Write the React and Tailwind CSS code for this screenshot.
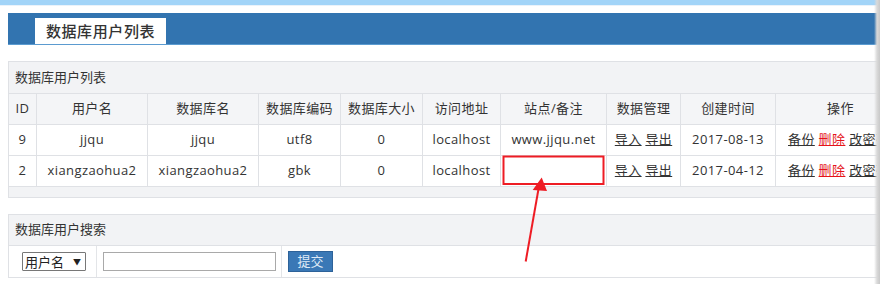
import React from 'react';

const font = { fontFamily: '"Open Sans", "Noto Sans CJK SC", sans-serif' };

const columns = [
  { title: 'ID', w: 'w-[28px]' },
  { title: '用户名', w: 'w-[111px]' },
  { title: '数据库名', w: 'w-[111px]' },
  { title: '数据库编码', w: 'w-[82px]' },
  { title: '数据库大小', w: 'w-[82px]' },
  { title: '访问地址', w: 'w-[78px]' },
  { title: '站点/备注', w: 'w-[106px]' },
  { title: '数据管理', w: 'w-[74px]' },
  { title: '创建时间', w: 'w-[95px]' },
  { title: '操作', w: 'w-[130px]' },
];

const rows = [
  { id: '9', user: 'jjqu', db: 'jjqu', charset: 'utf8', size: '0', host: 'localhost', note: 'www.jjqu.net', date: '2017-08-13' },
  { id: '2', user: 'xiangzaohua2', db: 'xiangzaohua2', charset: 'gbk', size: '0', host: 'localhost', note: '', date: '2017-04-12' },
];

function Cell({ children, className = '' }) {
  return (
    <td className={`h-[31px] border border-[#dfe1e5] text-center text-[13px] text-[#333] tracking-[0.4px] p-0 whitespace-nowrap ${className}`}>
      {children}
    </td>
  );
}

export default function App() {
  return (
    <div className="relative w-[880px] h-[284px] overflow-hidden bg-white" style={font}>
      {/* top strip */}
      <div className="h-[5px] bg-[#a2d4f8]" />
      <div className="h-[1px] bg-[#eaf2fa]" />
      <div className="h-[7px]" />

      {/* header bar with tab */}
      <div className="pl-[8px]">
        <div className="h-[32px] w-[880px] bg-[#3274b0] border-b border-[#5b9bd0] flex items-end pl-[27px]">
          <div className="w-[131px] h-[26px] bg-white flex items-center justify-center text-[15px] tracking-[0.6px] text-[#333] font-medium">
            数据库用户列表
          </div>
        </div>
      </div>

      {/* list panel */}
      <div className="ml-[8px] mt-[16px] w-[1000px] bg-[#f2f3f5] border-t border-l border-b border-[#dfe1e5]">
        <div className="h-[31px] flex items-center pl-[6px] text-[13px] text-[#333]">数据库用户列表</div>
        <table className="border-collapse table-fixed -ml-[1px]">
          <thead>
            <tr>
              {columns.map((c) => (
                <Cell key={c.title} className={`${c.w} bg-[#f4f5f7] h-[30px]`}>{c.title}</Cell>
              ))}
            </tr>
          </thead>
          <tbody className="bg-white">
            {rows.map((r) => (
              <tr key={r.id}>
                <Cell>{r.id}</Cell>
                <Cell>{r.user}</Cell>
                <Cell>{r.db}</Cell>
                <Cell>{r.charset}</Cell>
                <Cell>{r.size}</Cell>
                <Cell>{r.host}</Cell>
                <Cell>{r.note}</Cell>
                <Cell>
                  <span className="underline">导入</span> <span className="underline">导出</span>
                </Cell>
                <Cell>{r.date}</Cell>
                <Cell className="text-left pl-[12px]">
                  <span className="underline">备份</span>{' '}
                  <span className="underline text-[#e5141b]">删除</span>{' '}
                  <span className="underline">改密码</span>
                </Cell>
              </tr>
            ))}
          </tbody>
        </table>
        <div className="h-[10px]" />
      </div>

      {/* search panel */}
      <div className="ml-[8px] mt-[16px] w-[1000px] border-t border-l border-b border-[#dfe1e5]">
        <div className="h-[31px] bg-[#f2f3f5] border-b border-[#dfe1e5] flex items-center pl-[6px] text-[13px] text-[#333]">
          数据库用户搜索
        </div>
        <div className="h-[31px] flex bg-white">
          <div className="w-[88px] border-r border-[#e3e5e8] flex items-center pl-[13px]">
            <div className="w-[64px] h-[19px] border border-[#777] rounded-[1px] flex items-center justify-between px-[2px] text-[13px] text-[#222]" style={{ fontFamily: '"Noto Sans CJK SC", sans-serif' }}>
              <span className="leading-none">用户名</span>
              <span className="text-[8px] leading-none pr-[2px]">▼</span>
            </div>
          </div>
          <div className="w-[185px] border-r border-[#e3e5e8] flex items-center pl-[6px]">
            <div className="w-[173px] h-[19px] border border-[#a9a9a9]" />
          </div>
          <div className="flex items-center pl-[6px]">
            <div className="w-[45px] h-[21px] bg-[#3a78b6] border border-[#2d6299] flex items-center justify-center text-[13px] text-[#dfeaf6]">
              提交
            </div>
          </div>
        </div>
      </div>

      {/* annotation: red box and arrow */}
      <svg className="absolute left-0 top-0 pointer-events-none" width="880" height="284">
        <rect x="503.5" y="156.5" width="100" height="27.5" fill="none" stroke="#ee1c24" strokeWidth="2" />
        <line x1="525.7" y1="261.5" x2="538.5" y2="189" stroke="#ee1c24" strokeWidth="2" />
        <polygon points="541.7,177.5 532.7,190 547,191" fill="#ee1c24" />
      </svg>

      {/* right edge shadow */}
      <div className="absolute right-0 top-0 h-full w-[6px] bg-gradient-to-r from-[#ffffff00] via-[#d9d9d9] to-[#c8c8c8]" />
    </div>
  );
}
